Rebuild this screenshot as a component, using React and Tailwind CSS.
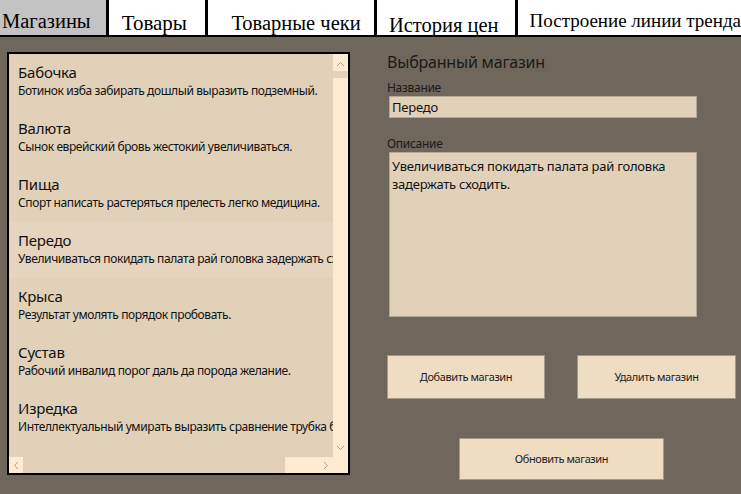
const tabs = [
  { label: "Магазины", w: "w-[109px]", pad: "pt-[10px] pl-[2px] text-[20.5px]", active: true },
  { label: "Товары", w: "w-[100px]", pad: "pt-[12px] pl-[13px] text-[21px]" },
  { label: "Товарные чеки", w: "w-[169px]", pad: "pt-[12px] pl-[23px] text-[20.5px]" },
  { label: "История цен", w: "w-[141px]", pad: "pt-[14px] pl-[12px] text-[20.5px]" },
  { label: "Построение линии тренда", w: "flex-1", pad: "pt-[10px] pl-[12px] text-[19px]" },
];

const shops = [
  { name: "Бабочка", desc: "Ботинок изба забирать дошлый выразить подземный." },
  { name: "Валюта", desc: "Сынок еврейский бровь жестокий увеличиваться." },
  { name: "Пища", desc: "Спорт написать растеряться прелесть легко медицина." },
  { name: "Передо", desc: "Увеличиваться покидать палата рай головка задержать сходить.", hover: true },
  { name: "Крыса", desc: "Результат умолять порядок пробовать." },
  { name: "Сустав", desc: "Рабочий инвалид порог даль да порода желание." },
  { name: "Изредка", desc: "Интеллектуальный умирать выразить сравнение трубка бабочка." },
  { name: "Внешний", desc: "Тысяча провинция мягкий спорт." },
];

const ui = { fontFamily: '"Noto Sans", "Open Sans", sans-serif' };
const serif = { fontFamily: '"Liberation Serif", "Times New Roman", serif' };

function ShopItem({ shop }) {
  return (
    <div className={`h-[56px] shrink-0 pl-[9px] pt-[8px] whitespace-nowrap ${shop.hover ? "bg-[#e5d5be]" : ""}`}>
      <div className="text-[15px] leading-[20px] text-[#111] tracking-[-0.2px]">{shop.name}</div>
      <div className="text-[12px] leading-[18px] text-[#111] tracking-[-0.4px]">{shop.desc}</div>
    </div>
  );
}

function Button({ children, className }) {
  return (
    <button
      className={`bg-[#eedcc3] border border-[#a39a88] text-[11px] text-[#1c1c1c] tracking-[-0.4px] ${className}`}
    >
      {children}
    </button>
  );
}

export default function App() {
  return (
    <div className="w-[741px] h-[494px] bg-[#6f675b] overflow-hidden flex flex-col" style={ui}>
      <div className="h-[37px] shrink-0 flex bg-white border-b-2 border-black" style={serif}>
        {tabs.map((t, i) => (
          <div
            key={t.label}
            className={`${t.w} ${t.pad} h-full leading-[22px] text-black whitespace-nowrap ${
              i < tabs.length - 1 ? "border-r-[3px] border-black" : ""
            } ${t.active ? "bg-[#c3c3c3]" : "bg-white"}`}
          >
            {t.label}
          </div>
        ))}
      </div>

      <div className="flex flex-1">
        <div className="pl-[7px] pt-[15px]">
          <div className="w-[343px] h-[423px] border-2 border-black flex flex-col bg-[#fdecd2]">
            <div className="flex flex-1 min-h-0">
              <div className="flex-1 bg-[#e2d1b9] overflow-hidden flex flex-col">
                {shops.map((s) => (
                  <ShopItem key={s.name} shop={s} />
                ))}
              </div>
              <div className="w-[15px] flex flex-col items-center text-[#a8a090]">
                <svg width="9" height="6" viewBox="0 0 9 6" className="mt-[7px]">
                  <path d="M1 5 L4.5 1.5 L8 5" fill="none" stroke="currentColor" strokeWidth="1" />
                </svg>
                <div className="w-full h-[7px] bg-[#e2d3bd] mt-[4px]" />
                <div className="flex-1" />
                <svg width="9" height="6" viewBox="0 0 9 6" className="mb-[6px]">
                  <path d="M1 1 L4.5 4.5 L8 1" fill="none" stroke="currentColor" strokeWidth="1" />
                </svg>
              </div>
            </div>
            <div className="h-[16px] shrink-0 flex items-center text-[#a8a090]">
              <svg width="6" height="9" viewBox="0 0 6 9" className="ml-[4px] shrink-0">
                <path d="M5 1 L1.5 4.5 L5 8" fill="none" stroke="currentColor" strokeWidth="1" />
              </svg>
              <div className="w-[262px] h-full bg-[#e0d0b8] ml-[4px]" />
              <div className="flex-1" />
              <svg width="6" height="9" viewBox="0 0 6 9" className="mr-[19px] shrink-0">
                <path d="M1 1 L4.5 4.5 L1 8" fill="none" stroke="currentColor" strokeWidth="1" />
              </svg>
            </div>
          </div>
        </div>

        <div className="ml-[37px] pt-[14px] flex flex-col w-[350px]">
          <div className="text-[16px] leading-[22px] text-[#1a1a1a] tracking-[-0.2px]">Выбранный магазин</div>
          <div className="text-[12px] leading-[16px] text-[#1a1a1a] mt-[7px] tracking-[-0.3px]">Название</div>
          <div className="ml-[2px] w-[308px] h-[22px] bg-[#e2d1b9] border border-[#b3a893] text-[13px] leading-[20px] pl-[2px] text-[#111] tracking-[-0.2px]">
            Передо
          </div>
          <div className="text-[12px] leading-[16px] text-[#1a1a1a] mt-[18px] tracking-[-0.3px]">Описание</div>
          <div className="ml-[2px] w-[308px] h-[165px] bg-[#e2d1b9] border border-[#b3a893] text-[13px] leading-[18px] pl-[2px] pt-[4px] text-[#111] tracking-[-0.25px]">
            Увеличиваться покидать палата рай головка
            <br />
            задержать сходить.
          </div>
          <div className="flex gap-[32px] mt-[38px]">
            <Button className="w-[158px] h-[44px]">Добавить магазин</Button>
            <Button className="w-[159px] h-[44px]">Удалить магазин</Button>
          </div>
          <div className="flex justify-center w-[349px] mt-[39px]">
            <Button className="w-[205px] h-[42px]">Обновить магазин</Button>
          </div>
        </div>
      </div>
    </div>
  );
}
